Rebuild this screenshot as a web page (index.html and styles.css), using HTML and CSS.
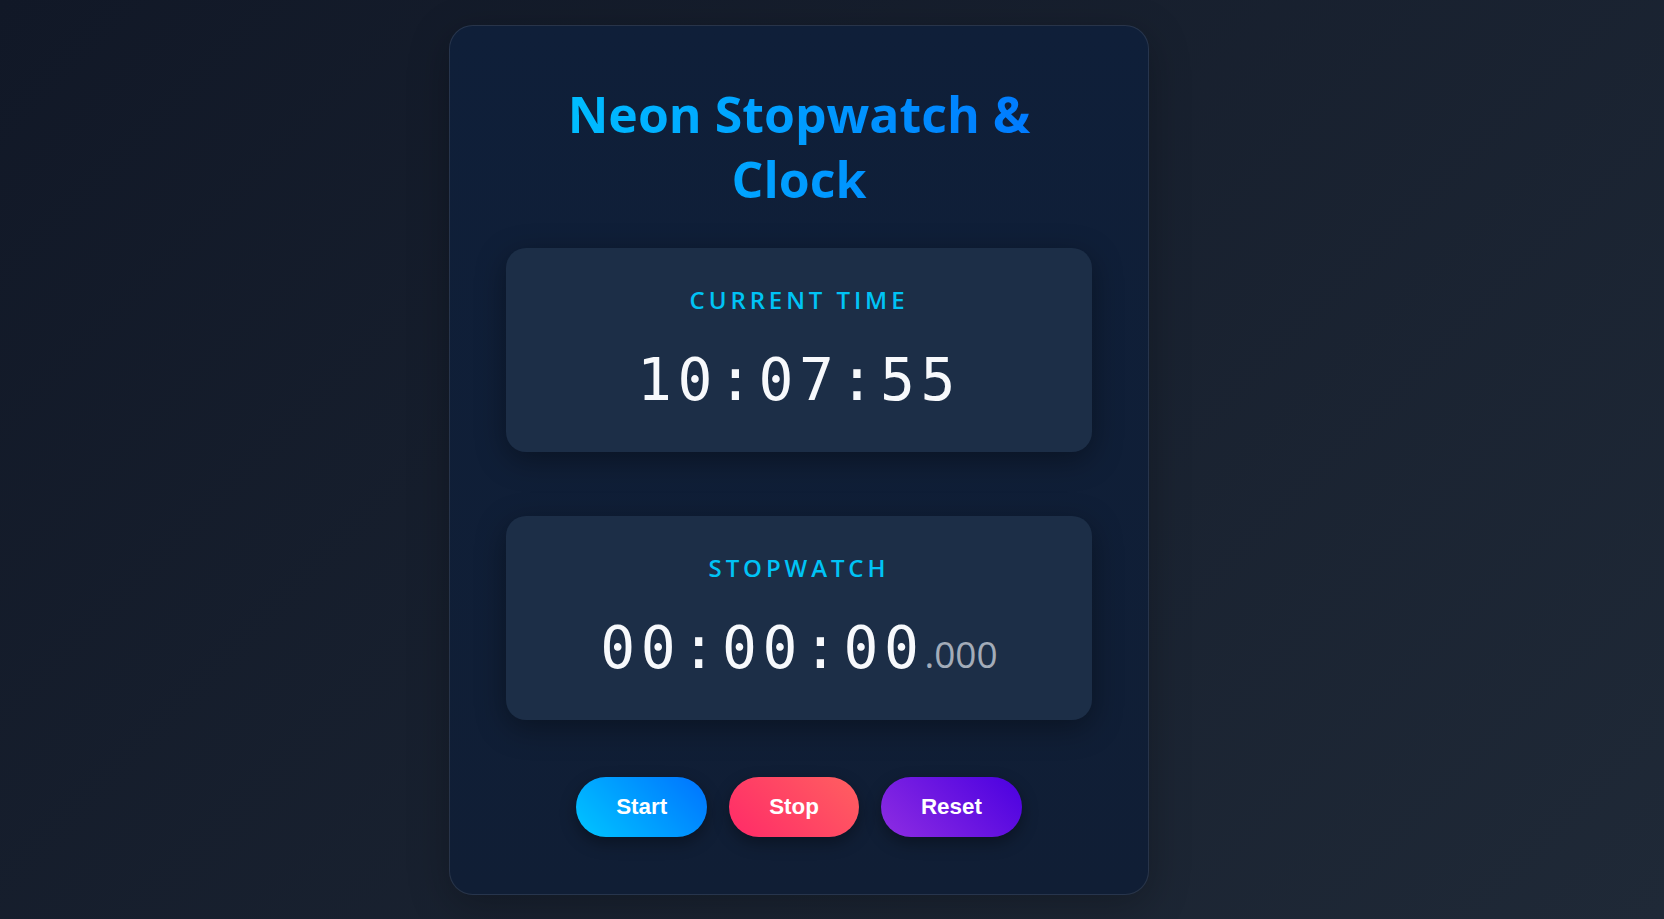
FILE: index.html
```html
<!DOCTYPE html>
<html lang="en">
<head>
<meta charset="utf-8">
<title>Neon Stopwatch &amp; Clock</title>
<link rel="stylesheet" href="styles.css">
</head>
<body>
  <main class="stage">
    <section class="card">
      <h1 class="title">Neon Stopwatch &amp; Clock</h1>

      <div class="panel">
        <div class="panel-label">CURRENT TIME</div>
        <div class="panel-time">10:07:55</div>
      </div>

      <div class="panel panel-stopwatch">
        <div class="panel-label">STOPWATCH</div>
        <div class="panel-time">00:00:00<span class="ms">.000</span></div>
      </div>

      <div class="controls">
        <button class="btn btn-start">Start</button>
        <button class="btn btn-stop">Stop</button>
        <button class="btn btn-reset">Reset</button>
      </div>
    </section>
  </main>
</body>
</html>
```

FILE: styles.css
```css
* { box-sizing: border-box; }

html, body {
  margin: 0;
  height: 100%;
}

body {
  background: linear-gradient(135deg, #111827 0%, #1f2937 100%);
  font-family: "Open Sans", "Noto Sans", sans-serif;
  color: #f5f7fa;
  overflow: hidden;
}

.stage {
  min-height: 100vh;
  display: flex;
  align-items: center;
  justify-content: center;
}

.card {
  width: 700px;
  margin-right: 66px;
  padding: 56px 56px 57px;
  border: 1px solid rgba(255, 255, 255, 0.1);
  border-radius: 24px;
  background: linear-gradient(180deg, #0f1f39 0%, #101e35 100%);
  box-shadow: 0 10px 40px rgba(0, 0, 0, 0.25);
  display: flex;
  flex-direction: column;
  align-items: stretch;
}

.title {
  margin: 0 0 36px;
  font-size: 50px;
  line-height: 65px;
  font-weight: 700;
  text-align: center;
  background: linear-gradient(90deg, #00c6ff, #0072ff);
  -webkit-background-clip: text;
  background-clip: text;
  color: transparent;
}

.panel {
  padding: 36px 24px 37px;
  border-radius: 20px;
  background: #1c2e47;
  box-shadow: 0 8px 30px rgba(0, 0, 0, 0.35);
  text-align: center;
}

.panel-stopwatch {
  margin-top: 64px;
}

.panel-label {
  font-size: 24px;
  line-height: 32px;
  font-weight: 600;
  letter-spacing: 3.9px;
  color: #00c3f5;
  margin-bottom: 29px;
}

.panel-time {
  font-family: "DejaVu Sans Mono", "Liberation Mono", monospace;
  font-size: 58px;
  line-height: 70px;
  letter-spacing: 5.6px;
  color: #f7f9fc;
  white-space: nowrap;
}

.ms {
  font-family: "Open Sans", "Noto Sans", sans-serif;
  font-variant-numeric: normal;
  font-weight: 400;
  font-size: 37px;
  line-height: 1;
  letter-spacing: 0;
  color: #a3acb9;
}

.controls {
  margin-top: 57px;
  display: flex;
  justify-content: center;
  gap: 22px;
}

.btn {
  border: none;
  border-radius: 999px;
  padding: 17px 40px;
  font-family: "Liberation Sans", Arial, sans-serif;
  font-size: 22.4px;
  font-weight: 700;
  line-height: 26px;
  color: #ffffff;
  cursor: pointer;
  box-shadow: 0 6px 16px rgba(0, 0, 0, 0.35);
}

.btn-start { background: linear-gradient(45deg, #00c6ff, #0072ff); }
.btn-stop  { background: linear-gradient(45deg, #ff2a68, #ff6060); }
.btn-reset { background: linear-gradient(45deg, #8e2de2, #4a00e0); }
```
